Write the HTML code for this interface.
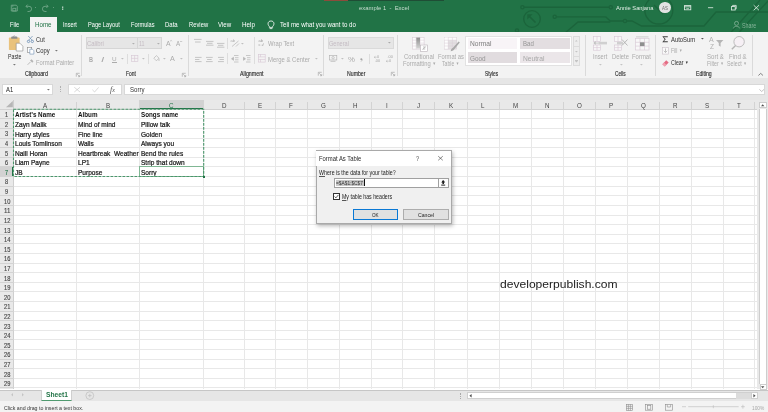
<!DOCTYPE html><html><head><meta charset="utf-8"><title>Excel</title><style>
*{margin:0;padding:0;box-sizing:border-box}
html,body{width:768px;height:412px;overflow:hidden;background:#fff;font-family:"Liberation Sans",sans-serif;}
.a{position:absolute;white-space:nowrap}
.t{position:absolute;white-space:nowrap;line-height:1.117}
</style></head><body><div id="root" style="position:absolute;left:0;top:0;width:768px;height:412px;overflow:hidden;will-change:transform">
<div class="a" style="left:0px;top:0px;width:768px;height:32.3px;background:#217346"></div>
<div class="a" style="left:323.8px;top:0px;width:24px;height:1px;background:#8c4b3b"></div>
<div class="a" style="left:347.8px;top:0px;width:96px;height:1px;background:#1f4d35"></div>
<svg class="a" style="left:0px;top:0px;overflow:visible" width="768" height="32" viewBox="0 0 768 32"><g stroke="#1b643b" stroke-width="1.35" fill="none">
<line x1="524" y1="7.2" x2="609.2" y2="7.2"/><circle cx="522.4" cy="7.2" r="1.6"/><circle cx="610.8" cy="7.2" r="1.6"/>
<line x1="556.3" y1="16.8" x2="605.6" y2="16.8"/><circle cx="554.7" cy="16.8" r="1.6"/>
<polyline points="605.6,16.8 610.3,21 623.4,21"/><circle cx="625" cy="21" r="1.6"/>
<polyline points="626.6,21 632,21 641.6,26 704,26 716,12 768,12"/>
<polyline points="565,33 578,22 610.3,22"/>
<polyline points="480,33 512,33"/>
<circle cx="532" cy="19" r="8.3"/><line x1="529" y1="16" x2="535.5" y2="22.5" stroke-width="1.6"/></g><path d="M527.3 14.3 h5.2 l-5.2 5.2z" fill="#1b643b"/><g stroke="#1b643b" stroke-width="1.35" fill="none">
<circle cx="517" cy="30.5" r="1.6"/>
<circle cx="658.8" cy="10" r="14"/><line x1="654" y1="5" x2="663" y2="14"/>
<line x1="730.4" y1="33" x2="760" y2="0"/><line x1="738.4" y1="33" x2="768" y2="1"/>
</g></svg>
<svg class="a" style="left:0px;top:0px;overflow:visible" width="80" height="16" viewBox="0 0 80 16"><g stroke="#6fa688" stroke-width="0.9" fill="none">
<path d="M11.3 5.2 h5 l1 1 v4.8 h-6z"/><rect x="12.8" y="8.3" width="3" height="2.7"/><line x1="12.8" y1="5.2" x2="12.8" y2="6.8"/>
<path d="M26 6.3 h3 a2.6 2.6 0 0 1 0 5.2 h-1.5"/><path d="M27.6 4.6 l-1.6 1.7 l1.6 1.7"/>
<path d="M48 6.3 h-3 a2.6 2.6 0 0 0 0 5.2 h1.5"/><path d="M46.4 4.6 l1.6 1.7 l-1.6 1.7"/>
</g>
<g fill="#6fa688"><rect x="35" y="7" width="1" height="0.8"/><rect x="53" y="7" width="1" height="0.8"/></g>
<g fill="#e4efe8"><rect x="62" y="6.6" width="1.3" height="1.1"/><rect x="62" y="8.6" width="1.3" height="1.1"/></g></svg>
<div class="t" style="left:358.70px;top:5.00px;font-size:6px;color:#c9ddd1;transform:scaleX(0.982);transform-origin:0 0;">example 1&nbsp; -&nbsp; Excel</div>
<div class="t" style="left:615.90px;top:5.00px;font-size:6px;color:#e3eee7;transform:scaleX(0.958);transform-origin:0 0;">Annie Sanjana</div>
<div class="a" style="left:658.8px;top:1.8px;width:12.1px;height:11.7px;background:#e3e3e3;border-radius:50%"></div>
<div class="t" style="left:662.00px;top:6.00px;font-size:4.8px;color:#6b6b6b;transform:scaleX(0.921);transform-origin:0 0;">AS</div>
<svg class="a" style="left:680px;top:0px;overflow:visible" width="88" height="16" viewBox="0 0 88 16"><g stroke="#e8f0eb" stroke-width="0.8" fill="none">
<rect x="4.4" y="5.6" width="6.4" height="4.2"/><line x1="4.4" y1="6.8" x2="10.8" y2="6.8"/><path d="M6.4 7.9 l1.2 1.2 l1.2 -1.2"/>
<line x1="28" y1="7.7" x2="33.2" y2="7.7"/>
<rect x="51.4" y="6.6" width="3.8" height="3.4"/><polyline points="52.6,6.6 52.6,5.4 56.2,5.4 56.2,8.8 55.2,8.8"/>
<line x1="73.7" y1="5.2" x2="79" y2="10.3"/><line x1="79" y1="5.2" x2="73.7" y2="10.3"/>
</g></svg>
<div class="a" style="left:30.2px;top:17px;width:26.6px;height:15.3px;background:#f3f3f3"></div>
<div class="t" style="left:9.80px;top:21.00px;font-size:7px;color:#ffffff;transform:scaleX(0.816);transform-origin:0 0;">File</div>
<div class="t" style="left:62.70px;top:21.00px;font-size:7px;color:#ffffff;transform:scaleX(0.794);transform-origin:0 0;">Insert</div>
<div class="t" style="left:87.80px;top:21.00px;font-size:7px;color:#ffffff;transform:scaleX(0.812);transform-origin:0 0;">Page Layout</div>
<div class="t" style="left:130.60px;top:21.00px;font-size:7px;color:#ffffff;transform:scaleX(0.808);transform-origin:0 0;">Formulas</div>
<div class="t" style="left:165.20px;top:21.00px;font-size:7px;color:#ffffff;transform:scaleX(0.858);transform-origin:0 0;">Data</div>
<div class="t" style="left:188.90px;top:21.00px;font-size:7px;color:#ffffff;transform:scaleX(0.832);transform-origin:0 0;">Review</div>
<div class="t" style="left:218.20px;top:21.00px;font-size:7px;color:#ffffff;transform:scaleX(0.877);transform-origin:0 0;">View</div>
<div class="t" style="left:242.00px;top:21.00px;font-size:7px;color:#ffffff;transform:scaleX(0.897);transform-origin:0 0;">Help</div>
<div class="t" style="left:35.10px;top:21.00px;font-size:7px;color:#217346;transform:scaleX(0.888);transform-origin:0 0;">Home</div>
<svg class="a" style="left:266px;top:20px;overflow:visible" width="10" height="10" viewBox="0 0 10 10"><g stroke="#fff" stroke-width="0.8" fill="none"><path d="M3.3 6.4 C1.3 4.6 1.6 1 5 1 C8.4 1 8.7 4.6 6.7 6.4 V7.4 H3.3 Z"/><line x1="3.6" y1="8.6" x2="6.4" y2="8.6"/></g></svg>
<div class="t" style="left:280.30px;top:21.00px;font-size:7px;color:#ffffff;transform:scaleX(0.878);transform-origin:0 0;">Tell me what you want to do</div>
<svg class="a" style="left:733px;top:21px;overflow:visible" width="7" height="8" viewBox="0 0 7 8"><g stroke="#86b59a" stroke-width="0.8" fill="none"><circle cx="3.5" cy="2.4" r="2"/><path d="M0.4 7.3 C0.8 4.8 6.2 4.8 6.6 7.3"/></g></svg>
<div class="t" style="left:741.90px;top:22.00px;font-size:6.6px;color:#86b59a;transform:scaleX(0.811);transform-origin:0 0;">Share</div>
<div class="a" style="left:0px;top:32.3px;width:768px;height:46px;background:#f3f3f3"></div>
<div class="a" style="left:0px;top:78.3px;width:768px;height:22.1px;background:#e6e6e6"></div>
<div class="t" style="left:25.10px;top:70.00px;font-size:6.4px;color:#2e2e2e;transform:scaleX(0.836);transform-origin:0 0;-webkit-text-stroke:0.15px #333;">Clipboard</div>
<div class="t" style="left:125.90px;top:70.00px;font-size:6.4px;color:#2e2e2e;transform:scaleX(0.766);transform-origin:0 0;-webkit-text-stroke:0.15px #333;">Font</div>
<div class="t" style="left:239.80px;top:70.00px;font-size:6.4px;color:#2e2e2e;transform:scaleX(0.830);transform-origin:0 0;-webkit-text-stroke:0.15px #333;">Alignment</div>
<div class="t" style="left:347.20px;top:70.00px;font-size:6.4px;color:#2e2e2e;transform:scaleX(0.813);transform-origin:0 0;-webkit-text-stroke:0.15px #333;">Number</div>
<div class="t" style="left:484.60px;top:70.00px;font-size:6.4px;color:#2e2e2e;transform:scaleX(0.751);transform-origin:0 0;-webkit-text-stroke:0.15px #333;">Styles</div>
<div class="t" style="left:615.00px;top:70.00px;font-size:6.4px;color:#2e2e2e;transform:scaleX(0.744);transform-origin:0 0;-webkit-text-stroke:0.15px #333;">Cells</div>
<div class="t" style="left:695.90px;top:70.00px;font-size:6.4px;color:#2e2e2e;transform:scaleX(0.802);transform-origin:0 0;-webkit-text-stroke:0.15px #333;">Editing</div>
<svg class="a" style="left:76px;top:72.6px;overflow:visible" width="4" height="4" viewBox="0 0 4 4"><g stroke="#9a9a9a" stroke-width="0.6" fill="none"><polyline points="0.3,3.7 0.3,0.3 3.7,0.3"/><line x1="1.2" y1="1.2" x2="3.6" y2="3.6"/><polyline points="2,3.7 3.7,3.7 3.7,2"/></g></svg>
<svg class="a" style="left:182.1px;top:72.6px;overflow:visible" width="4" height="4" viewBox="0 0 4 4"><g stroke="#9a9a9a" stroke-width="0.6" fill="none"><polyline points="0.3,3.7 0.3,0.3 3.7,0.3"/><line x1="1.2" y1="1.2" x2="3.6" y2="3.6"/><polyline points="2,3.7 3.7,3.7 3.7,2"/></g></svg>
<svg class="a" style="left:318.4px;top:72.4px;overflow:visible" width="4" height="4" viewBox="0 0 4 4"><g stroke="#9a9a9a" stroke-width="0.6" fill="none"><polyline points="0.3,3.7 0.3,0.3 3.7,0.3"/><line x1="1.2" y1="1.2" x2="3.6" y2="3.6"/><polyline points="2,3.7 3.7,3.7 3.7,2"/></g></svg>
<svg class="a" style="left:391.3px;top:72.4px;overflow:visible" width="4" height="4" viewBox="0 0 4 4"><g stroke="#9a9a9a" stroke-width="0.6" fill="none"><polyline points="0.3,3.7 0.3,0.3 3.7,0.3"/><line x1="1.2" y1="1.2" x2="3.6" y2="3.6"/><polyline points="2,3.7 3.7,3.7 3.7,2"/></g></svg>
<div class="a" style="left:81px;top:34.5px;width:1px;height:41.5px;background:#dadada"></div>
<div class="a" style="left:188px;top:34.5px;width:1px;height:41.5px;background:#dadada"></div>
<div class="a" style="left:323px;top:34.5px;width:1px;height:41.5px;background:#dadada"></div>
<div class="a" style="left:397px;top:34.5px;width:1px;height:41.5px;background:#dadada"></div>
<div class="a" style="left:585px;top:34.5px;width:1px;height:41.5px;background:#dadada"></div>
<div class="a" style="left:655px;top:34.5px;width:1px;height:41.5px;background:#dadada"></div>
<div class="a" style="left:752px;top:34.5px;width:1px;height:41.5px;background:#dadada"></div>
<svg class="a" style="left:8px;top:35px;overflow:visible" width="16" height="17" viewBox="0 0 16 17"><rect x="0.9" y="2.6" width="10.7" height="12.3" rx="0.6" fill="#e9c27c"/>
<path d="M3.2 3.7 v-1.4 q0 -0.9 0.9 -0.9 h1.2 q0.3 -0.9 1 -0.9 q0.7 0 1 0.9 h1.2 q0.9 0 0.9 0.9 v1.4z" fill="#8c8c8c"/><circle cx="6.3" cy="1.3" r="0.45" fill="#f3f3f3"/>
<path d="M8.2 8.2 h3.7 l3 3 v4.8 h-6.7z" fill="#fff" stroke="#8a8a8a" stroke-width="0.6"/></svg>
<div class="t" style="left:7.80px;top:53.00px;font-size:6.4px;color:#303030;transform:scaleX(0.819);transform-origin:0 0;">Paste</div>
<svg class="a" style="left:12.9px;top:63.7px;overflow:visible" width="3" height="2" viewBox="0 0 3 2"><path d="M0 0 h2.8 l-1.4 1.4z" fill="#777"/></svg>
<svg class="a" style="left:26.8px;top:35.9px;overflow:visible" width="7" height="7" viewBox="0 0 7 7"><g stroke="#6d8fb3" stroke-width="0.7" fill="none"><line x1="1.2" y1="0" x2="5.2" y2="4.3"/><line x1="5.6" y1="0" x2="1.6" y2="4.3"/></g><g stroke="#5b82ad" stroke-width="0.7" fill="none"><circle cx="1.5" cy="5.4" r="1.2"/><circle cx="5.3" cy="5.4" r="1.2"/></g></svg>
<div class="t" style="left:36.00px;top:36.00px;font-size:6.4px;color:#303030;transform:scaleX(0.874);transform-origin:0 0;">Cut</div>
<svg class="a" style="left:26.5px;top:47.1px;overflow:visible" width="7.5" height="7.5" viewBox="0 0 7.5 7.5"><g stroke="#858585" stroke-width="0.6" fill="#fff"><rect x="0.5" y="0.5" width="4.2" height="5"/><path d="M2.8 2.2 h2.6 l1.5 1.5 v3.4 h-4.1z" stroke="#6d8fb3"/></g></svg>
<div class="t" style="left:36.00px;top:47.00px;font-size:6.4px;color:#303030;transform:scaleX(0.917);transform-origin:0 0;">Copy</div>
<svg class="a" style="left:54.5px;top:50.3px;overflow:visible" width="3" height="2" viewBox="0 0 3 2"><path d="M0 0 h2.8 l-1.4 1.4z" fill="#777"/></svg>
<svg class="a" style="left:27.4px;top:59.4px;overflow:visible" width="6.5" height="6.5" viewBox="0 0 6.5 6.5"><g stroke="#b5b5b5" stroke-width="0.9" fill="none"><line x1="0.6" y1="5.8" x2="3.4" y2="3"/></g><path d="M3 1.5 l1.5 -1.2 l2 2 l-1.2 1.5z" fill="#b5b5b5"/></svg>
<div class="t" style="left:36.00px;top:59.00px;font-size:6.4px;color:#ababab;transform:scaleX(0.905);transform-origin:0 0;">Format Painter</div>
<div class="a" style="left:86.2px;top:37.1px;width:51.4px;height:12px;background:#e6e6e6;border:0.6px solid #d6d6d6"></div>
<div class="a" style="left:137.1px;top:37.1px;width:24.8px;height:12px;background:#e6e6e6;border:0.6px solid #d6d6d6"></div>
<div class="t" style="left:87.30px;top:40.00px;font-size:6.6px;color:#c4bcc3;transform:scaleX(0.903);transform-origin:0 0;">Calibri</div>
<div class="t" style="left:139.00px;top:40.00px;font-size:6.6px;color:#c4bcc3;transform:scaleX(0.816);transform-origin:0 0;">11</div>
<svg class="a" style="left:132.2px;top:42.599999999999994px;overflow:visible" width="3" height="2" viewBox="0 0 3 2"><path d="M0 0 h2.8 l-1.4 1.4z" fill="#b0b0b0"/></svg>
<svg class="a" style="left:157.29999999999998px;top:42.599999999999994px;overflow:visible" width="3" height="2" viewBox="0 0 3 2"><path d="M0 0 h2.8 l-1.4 1.4z" fill="#b0b0b0"/></svg>
<div class="t" style="left:165.70px;top:40.00px;font-size:6.8px;color:#ababab;transform:scaleX(1.010);transform-origin:0 0;">A</div>
<div class="t" style="left:176.20px;top:40.00px;font-size:6.4px;color:#ababab;transform:scaleX(0.979);transform-origin:0 0;">A</div>
<svg class="a" style="left:170.2px;top:40.2px;overflow:visible" width="2.5" height="2" viewBox="0 0 2.5 2"><path d="M0 1.3 l1.1 -1 l1.1 1" stroke="#ababab" stroke-width="0.55" fill="none"/></svg>
<svg class="a" style="left:180.3px;top:40.6px;overflow:visible" width="2.5" height="2" viewBox="0 0 2.5 2"><line x1="0" y1="0.5" x2="2.2" y2="0.5" stroke="#ababab" stroke-width="0.55"/></svg>
<div class="t" style="left:89.30px;top:56.00px;font-size:6.4px;color:#ababab;font-weight:bold;transform:scaleX(0.868);transform-origin:0 0;">B</div>
<div class="t" style="left:101.00px;top:56.00px;font-size:6.4px;color:#ababab;font-style:italic;transform:scaleX(1.842);transform-origin:0 0;">I</div>
<div class="t" style="left:111.50px;top:56.00px;font-size:6.2px;color:#ababab;transform:scaleX(1.030);transform-origin:0 0;">U</div>
<div class="a" style="left:111.5px;top:62.2px;width:5px;height:0.6px;background:#ababab"></div>
<svg class="a" style="left:121.1px;top:58.0px;overflow:visible" width="3" height="2" viewBox="0 0 3 2"><path d="M0 0 h2.8 l-1.4 1.4z" fill="#c0c0c0"/></svg>
<div class="a" style="left:127px;top:53.8px;width:1px;height:9.800000000000004px;background:#dddddd"></div>
<svg class="a" style="left:131.2px;top:55.2px;overflow:visible" width="7.2" height="6.8" viewBox="0 0 7.2 6.8"><g stroke="#d6c6d4" stroke-width="0.6" fill="none"><rect x="0.3" y="0.3" width="6.6" height="6.2"/><line x1="3.6" y1="0.3" x2="3.6" y2="6.5"/><line x1="0.3" y1="3.4" x2="6.9" y2="3.4"/></g></svg>
<svg class="a" style="left:141.79999999999998px;top:58.0px;overflow:visible" width="3" height="2" viewBox="0 0 3 2"><path d="M0 0 h2.8 l-1.4 1.4z" fill="#c0c0c0"/></svg>
<div class="a" style="left:148px;top:53.8px;width:1px;height:9.800000000000004px;background:#dddddd"></div>
<svg class="a" style="left:153px;top:55px;overflow:visible" width="6.5" height="7" viewBox="0 0 6.5 7"><g stroke="#b5b5b5" stroke-width="0.7" fill="none"><path d="M0.8 3.2 l2.6 -2.6 l2.6 2.6 l-2.6 2.6z"/><path d="M6 3.5 v2.5"/></g></svg>
<svg class="a" style="left:162.5px;top:58.0px;overflow:visible" width="3" height="2" viewBox="0 0 3 2"><path d="M0 0 h2.8 l-1.4 1.4z" fill="#c0c0c0"/></svg>
<div class="t" style="left:170.30px;top:55.00px;font-size:6.6px;color:#ababab;transform:scaleX(1.085);transform-origin:0 0;">A</div>
<svg class="a" style="left:179.79999999999998px;top:58.0px;overflow:visible" width="3" height="2" viewBox="0 0 3 2"><path d="M0 0 h2.8 l-1.4 1.4z" fill="#c0c0c0"/></svg>
<svg class="a" style="left:194.25px;top:39.3px;overflow:visible" width="8" height="6" viewBox="0 0 8 6"><g stroke="#b5b5b5" stroke-width="0.75"><line x1="0" y1="0.4" x2="7.6" y2="0.4"/><line x1="1" y1="3.0" x2="6.6" y2="3.0"/></g></svg>
<svg class="a" style="left:205.5px;top:41px;overflow:visible" width="8" height="6" viewBox="0 0 8 6"><g stroke="#b5b5b5" stroke-width="0.75"><line x1="0" y1="0.4" x2="7.5" y2="0.4"/><line x1="1" y1="2.3" x2="6.5" y2="2.3"/><line x1="0" y1="4.2" x2="7.5" y2="4.2"/></g></svg>
<svg class="a" style="left:216.9px;top:43px;overflow:visible" width="8" height="6" viewBox="0 0 8 6"><g stroke="#b5b5b5" stroke-width="0.75"><line x1="0" y1="0.4" x2="7.4" y2="0.4"/><line x1="1" y1="2.3" x2="6.4" y2="2.3"/><line x1="0" y1="4.2" x2="7.4" y2="4.2"/></g></svg>
<div class="a" style="left:227px;top:38.3px;width:1px;height:10.700000000000003px;background:#dddddd"></div>
<svg class="a" style="left:230.9px;top:39.5px;overflow:visible" width="9" height="7" viewBox="0 0 9 7"><g stroke="#b5b5b5" stroke-width="0.7" fill="none"><path d="M1 6.5 L7.5 1"/><path d="M5 6.5 l3 -3"/></g></svg>
<div class="t" style="left:230.5px;top:38.8px;font-size:4px;color:#ababab;line-height:1">ab</div>
<svg class="a" style="left:241.1px;top:42.8px;overflow:visible" width="3" height="2" viewBox="0 0 3 2"><path d="M0 0 h2.8 l-1.4 1.4z" fill="#c0c0c0"/></svg>
<div class="a" style="left:254px;top:37.4px;width:1px;height:26.699999999999996px;background:#dddddd"></div>
<svg class="a" style="left:194.8px;top:56.6px;overflow:visible" width="8" height="6" viewBox="0 0 8 6"><g stroke="#b5b5b5" stroke-width="0.75"><line x1="0" y1="0.4" x2="6.6" y2="0.4"/><line x1="0" y1="2.5" x2="4.4" y2="2.5"/><line x1="0" y1="4.6000000000000005" x2="6.6" y2="4.6000000000000005"/></g></svg>
<svg class="a" style="left:205.9px;top:56.6px;overflow:visible" width="8" height="6" viewBox="0 0 8 6"><g stroke="#b5b5b5" stroke-width="0.75"><line x1="0" y1="0.4" x2="6.7" y2="0.4"/><line x1="1.1" y1="2.5" x2="5.6" y2="2.5"/><line x1="0" y1="4.6000000000000005" x2="6.7" y2="4.6000000000000005"/></g></svg>
<svg class="a" style="left:217.5px;top:56.6px;overflow:visible" width="8" height="6" viewBox="0 0 8 6"><g stroke="#b5b5b5" stroke-width="0.75"><line x1="0" y1="0.4" x2="5.9" y2="0.4"/><line x1="1.5" y1="2.5" x2="5.9" y2="2.5"/><line x1="0" y1="4.6000000000000005" x2="5.9" y2="4.6000000000000005"/></g></svg>
<div class="a" style="left:227px;top:53.4px;width:1px;height:10.699999999999996px;background:#dddddd"></div>
<svg class="a" style="left:231.4px;top:54.9px;overflow:visible" width="8" height="7.5" viewBox="0 0 8 7.5"><g stroke="#b5b5b5" stroke-width="0.7" fill="none"><line x1="3" y1="0.5" x2="7.5" y2="0.5"/><line x1="3" y1="7" x2="7.5" y2="7"/><line x1="4" y1="2.7" x2="7.5" y2="2.7"/><line x1="4" y1="4.8" x2="7.5" y2="4.8"/><path d="M2.5 2.3 l-2 1.5 l2 1.5z" fill="#b5b5b5"/></g></svg>
<svg class="a" style="left:242.5px;top:54.9px;overflow:visible" width="8" height="7.5" viewBox="0 0 8 7.5"><g stroke="#b5b5b5" stroke-width="0.7" fill="none"><line x1="3" y1="0.5" x2="7.5" y2="0.5"/><line x1="3" y1="7" x2="7.5" y2="7"/><line x1="4" y1="2.7" x2="7.5" y2="2.7"/><line x1="4" y1="4.8" x2="7.5" y2="4.8"/><path d="M0.5 2.3 l2 1.5 l-2 1.5z" fill="#b5b5b5"/></g></svg>
<div class="t" style="left:258.5px;top:39.3px;font-size:4px;color:#9b9b9b;line-height:1">ab</div>
<div class="t" style="left:258.5px;top:43px;font-size:4px;color:#9b9b9b;line-height:1">c↲</div>
<div class="t" style="left:268.00px;top:40.00px;font-size:6.4px;color:#ababab;transform:scaleX(0.917);transform-origin:0 0;">Wrap Text</div>
<svg class="a" style="left:258.2px;top:54.3px;overflow:visible" width="7.5" height="8.4" viewBox="0 0 7.5 8.4"><g stroke="#d6c6d4" stroke-width="0.6" fill="none"><rect x="0.3" y="0.3" width="6.9" height="7.8"/><line x1="0.3" y1="2.9" x2="7.2" y2="2.9"/><line x1="0.3" y1="5.5" x2="7.2" y2="5.5"/><line x1="2.5" y1="0.3" x2="2.5" y2="2.9"/><line x1="2.5" y1="5.5" x2="2.5" y2="8.1"/></g></svg>
<div class="t" style="left:268.00px;top:56.00px;font-size:6.4px;color:#ababab;transform:scaleX(0.930);transform-origin:0 0;">Merge &amp; Center</div>
<svg class="a" style="left:314.8px;top:58.4px;overflow:visible" width="3" height="2" viewBox="0 0 3 2"><path d="M0 0 h2.8 l-1.4 1.4z" fill="#c0c0c0"/></svg>
<div class="a" style="left:328px;top:37.1px;width:65.6px;height:12.2px;background:#e6e6e6;border:0.5px solid #dadada"></div>
<div class="t" style="left:329.30px;top:40.00px;font-size:6.6px;color:#c4bcc3;transform:scaleX(0.851);transform-origin:0 0;">General</div>
<svg class="a" style="left:388.40000000000003px;top:42.3px;overflow:visible" width="3" height="2" viewBox="0 0 3 2"><path d="M0 0 h2.8 l-1.4 1.4z" fill="#aaa"/></svg>
<svg class="a" style="left:329.3px;top:54.8px;overflow:visible" width="8.2" height="7.8" viewBox="0 0 8.2 7.8"><g stroke="#b5b5b5" stroke-width="0.7" fill="none"><rect x="0.4" y="0.4" width="7.4" height="4.6"/><circle cx="4.1" cy="2.7" r="1.2"/><line x1="1.5" y1="6.4" x2="6.5" y2="6.4"/></g></svg>
<svg class="a" style="left:340.6px;top:58.3px;overflow:visible" width="3" height="2" viewBox="0 0 3 2"><path d="M0 0 h2.8 l-1.4 1.4z" fill="#c0c0c0"/></svg>
<div class="t" style="left:347.50px;top:56.00px;font-size:6.5px;color:#ababab;transform:scaleX(1.193);transform-origin:0 0;">%</div>
<svg class="a" style="left:360px;top:57.5px;overflow:visible" width="3" height="4" viewBox="0 0 3 4"><circle cx="1.3" cy="1.2" r="1" fill="#a5a5a5"/><path d="M2.2 1.3 q0 1.6 -1.2 2.3" stroke="#a5a5a5" stroke-width="0.6" fill="none"/></svg>
<div class="a" style="left:369px;top:54px;width:1px;height:10px;background:#dddddd"></div>
<svg class="a" style="left:373.5px;top:54.5px;overflow:visible" width="8" height="8" viewBox="0 0 8 8"><text x="3" y="3.4" font-size="3.8" fill="#a5a5a5" font-family="Liberation Sans">0</text><path d="M0.3 2.2 h2.4 M0.3 2.2 l1 -0.9 M0.3 2.2 l1 0.9" stroke="#a5a5a5" stroke-width="0.5" fill="none"/><text x="0.8" y="7.4" font-size="3.8" fill="#a5a5a5" font-family="Liberation Sans">.00</text></svg>
<svg class="a" style="left:385.5px;top:54.5px;overflow:visible" width="8" height="8" viewBox="0 0 8 8"><text x="1.5" y="3.4" font-size="3.8" fill="#a5a5a5" font-family="Liberation Sans">.00</text><path d="M0.3 6.2 h2.4 M0.3 6.2 l1 -0.9 M0.3 6.2 l1 0.9" stroke="#a5a5a5" stroke-width="0.5" fill="none"/><text x="3" y="7.4" font-size="3.8" fill="#a5a5a5" font-family="Liberation Sans">0</text></svg>
<svg class="a" style="left:411.7px;top:37.1px;overflow:visible" width="16" height="15" viewBox="0 0 16 15"><rect x="0.3" y="0.3" width="11.8" height="11.8" fill="#fdfdfd" stroke="#d9cdd6" stroke-width="0.6"/><g stroke="#d9cdd6" stroke-width="0.5"><line x1="0.3" y1="3.2" x2="12.1" y2="3.2"/><line x1="0.3" y1="6.1" x2="12.1" y2="6.1"/><line x1="0.3" y1="9" x2="12.1" y2="9"/><line x1="4.2" y1="0.3" x2="4.2" y2="12.1"/><line x1="8.1" y1="0.3" x2="8.1" y2="12.1"/></g><defs><linearGradient id="cfg" x1="0" y1="0" x2="0" y2="1"><stop offset="0" stop-color="#8e8e8e"/><stop offset="1" stop-color="#d6d6d6"/></linearGradient></defs><rect x="4.3" y="0.6" width="3.7" height="11" fill="url(#cfg)"/><rect x="8.6" y="8" width="7" height="6.6" fill="#fff" stroke="#b8b0b6" stroke-width="0.6"/><path d="M10.6 12.6 l3 -3 M11 10 h2.5 M10.8 12 h2.5" stroke="#9a9a9a" stroke-width="0.6"/></svg>
<div class="t" style="left:404.00px;top:53.00px;font-size:6.4px;color:#ababab;transform:scaleX(0.940);transform-origin:0 0;">Conditional</div>
<div class="t" style="left:402.80px;top:60.00px;font-size:6.4px;color:#ababab;transform:scaleX(0.904);transform-origin:0 0;">Formatting <span style="font-size:4.4px;vertical-align:1px">▼</span></div>
<svg class="a" style="left:443.8px;top:37.1px;overflow:visible" width="16" height="15" viewBox="0 0 16 15"><rect x="0.3" y="0.3" width="12.3" height="11.8" fill="#e3e0e2" stroke="#d9cdd6" stroke-width="0.6"/><rect x="0.6" y="0.6" width="11.7" height="2.6" fill="#fdfdfd"/><rect x="0.6" y="0.6" width="3.6" height="11.2" fill="#fdfdfd"/><g stroke="#d9cdd6" stroke-width="0.5"><line x1="0.3" y1="3.2" x2="12.6" y2="3.2"/><line x1="0.3" y1="6.1" x2="12.6" y2="6.1"/><line x1="0.3" y1="9" x2="12.6" y2="9"/><line x1="4.3" y1="0.3" x2="4.3" y2="12.1"/><line x1="8.4" y1="0.3" x2="8.4" y2="12.1"/></g><path d="M6.6 14.2 q0.3 -2.6 2.4 -3.4 l5.6 -6.4 l1.2 1.1 l-5.3 6.6 q-0.9 2.2 -3.9 2.1z" fill="#a9a9a9"/></svg>
<div class="t" style="left:437.90px;top:53.00px;font-size:6.4px;color:#ababab;transform:scaleX(0.899);transform-origin:0 0;">Format as</div>
<div class="t" style="left:442.00px;top:60.00px;font-size:6.4px;color:#ababab;transform:scaleX(0.802);transform-origin:0 0;">Table <span style="font-size:4.4px;vertical-align:1px">▼</span></div>
<div class="a" style="left:465.4px;top:35.75px;width:106.6px;height:30.65px;background:#fff;border:0.5px solid #e2e2e2"></div>
<div class="a" style="left:467.5px;top:38.25px;width:49.5px;height:10.45px;background:#f8f4f7"></div>
<div class="a" style="left:520px;top:38.25px;width:50.2px;height:10.45px;background:#e3dee1"></div>
<div class="a" style="left:467.5px;top:52.4px;width:49.5px;height:10.85px;background:#e1dcdf"></div>
<div class="a" style="left:520px;top:52.4px;width:50.2px;height:10.85px;background:#ebe6e9"></div>
<div class="t" style="left:469.60px;top:40.00px;font-size:7px;color:#7c7c7c;transform:scaleX(0.948);transform-origin:0 0;">Normal</div>
<div class="t" style="left:522.70px;top:40.00px;font-size:7px;color:#959595;transform:scaleX(0.867);transform-origin:0 0;">Bad</div>
<div class="t" style="left:469.60px;top:55.00px;font-size:7px;color:#959595;transform:scaleX(0.911);transform-origin:0 0;">Good</div>
<div class="t" style="left:522.70px;top:55.00px;font-size:7px;color:#a8a8a8;transform:scaleX(0.952);transform-origin:0 0;">Neutral</div>
<div class="a" style="left:572.7px;top:35.75px;width:6.9px;height:30.65px;background:#ededed;border:0.5px solid #dcdcdc"></div>
<div class="a" style="left:572.7px;top:45.9px;width:6.9px;height:0.5px;background:#dcdcdc"></div>
<div class="a" style="left:572.7px;top:56.1px;width:6.9px;height:0.5px;background:#dcdcdc"></div>
<svg class="a" style="left:574.8px;top:39.5px;overflow:visible" width="3" height="2" viewBox="0 0 3 2"><path d="M0 1.4 h2.6 l-1.3 -1.3z" fill="#c4c4c4"/></svg>
<svg class="a" style="left:574.75px;top:50.5px;overflow:visible" width="3" height="2" viewBox="0 0 3 2"><path d="M0 0 h2.8 l-1.4 1.4z" fill="#c4c4c4"/></svg>
<svg class="a" style="left:574.75px;top:61.3px;overflow:visible" width="3" height="2" viewBox="0 0 3 2"><path d="M0 0 h2.8 l-1.4 1.4z" fill="#c4c4c4"/></svg>
<div class="a" style="left:574.8px;top:60.1px;width:2.8px;height:0.5px;background:#c4c4c4"></div>
<svg class="a" style="left:592.7px;top:36.3px;overflow:visible" width="14.5" height="14.5" viewBox="0 0 14.5 14.5"><g stroke="#d6c6d4" stroke-width="0.6" fill="#f8f8f8"><rect x="0.5" y="0.3" width="7" height="5"/><line x1="4" y1="0.3" x2="4" y2="5.3"/><rect x="0.5" y="9" width="7" height="5.2"/><line x1="4" y1="9" x2="4" y2="14.2"/><line x1="0.5" y1="11.6" x2="7.5" y2="11.6"/></g><rect x="5.5" y="5.8" width="8.5" height="2.6" fill="#d0d0d0"/><path d="M0.3 7.1 l2.4 -2 v4z" fill="#c0c0c0"/><line x1="1.5" y1="7.1" x2="5.5" y2="7.1" stroke="#c0c0c0" stroke-width="0.8"/></svg>
<svg class="a" style="left:614px;top:36.3px;overflow:visible" width="14.5" height="14.5" viewBox="0 0 14.5 14.5"><g stroke="#d6c6d4" stroke-width="0.6" fill="#f8f8f8"><rect x="0.5" y="0.3" width="7" height="5"/><line x1="4" y1="0.3" x2="4" y2="5.3"/><rect x="0.5" y="9" width="7" height="5.2"/><line x1="4" y1="9" x2="4" y2="14.2"/><line x1="0.5" y1="11.6" x2="7.5" y2="11.6"/></g><rect x="3" y="5.8" width="6" height="2.6" fill="#d0d0d0"/><g stroke="#a8a8a8" stroke-width="0.8"><line x1="8" y1="3.5" x2="13.5" y2="9.5"/><line x1="13.5" y1="3.5" x2="8" y2="9.5"/></g></svg>
<svg class="a" style="left:634.5px;top:36.3px;overflow:visible" width="14.5" height="14.5" viewBox="0 0 14.5 14.5"><g stroke="#d6c6d4" stroke-width="0.6" fill="#f8f8f8"><rect x="0.5" y="2.5" width="13.5" height="11.5"/><line x1="0.5" y1="6.3" x2="14" y2="6.3"/><line x1="0.5" y1="10.1" x2="14" y2="10.1"/><line x1="5" y1="2.5" x2="5" y2="14"/><line x1="9.5" y1="2.5" x2="9.5" y2="14"/></g><rect x="5" y="6.3" width="4.5" height="3.8" fill="#8f8f8f"/><g stroke="#a8a8a8" stroke-width="0.5"><line x1="1" y1="0.9" x2="13.5" y2="0.9"/></g></svg>
<div class="t" style="left:592.70px;top:53.00px;font-size:6.4px;color:#ababab;transform:scaleX(0.894);transform-origin:0 0;">Insert</div>
<div class="t" style="left:612.00px;top:53.00px;font-size:6.4px;color:#ababab;transform:scaleX(0.914);transform-origin:0 0;">Delete</div>
<div class="t" style="left:631.80px;top:53.00px;font-size:6.4px;color:#ababab;transform:scaleX(0.928);transform-origin:0 0;">Format</div>
<svg class="a" style="left:598.5px;top:63.5px;overflow:visible" width="3" height="2" viewBox="0 0 3 2"><path d="M0 0 h2.8 l-1.4 1.4z" fill="#c4c4c4"/></svg>
<svg class="a" style="left:619.5px;top:63.5px;overflow:visible" width="3" height="2" viewBox="0 0 3 2"><path d="M0 0 h2.8 l-1.4 1.4z" fill="#c4c4c4"/></svg>
<svg class="a" style="left:640.2px;top:63.5px;overflow:visible" width="3" height="2" viewBox="0 0 3 2"><path d="M0 0 h2.8 l-1.4 1.4z" fill="#c4c4c4"/></svg>
<svg class="a" style="left:662.4px;top:36.4px;overflow:visible" width="6.2" height="6.6" viewBox="0 0 6.2 6.6"><path d="M0.3 0.3 H5.8 V1.3 H1.8 L3.8 3.3 L1.8 5.3 H5.8 V6.3 H0.3 L2.6 3.3 Z" fill="#3d3d3d"/></svg>
<div class="t" style="left:671.20px;top:36.00px;font-size:6.4px;color:#303030;transform:scaleX(0.919);transform-origin:0 0;">AutoSum</div>
<svg class="a" style="left:700.6px;top:38.3px;overflow:visible" width="3" height="2" viewBox="0 0 3 2"><path d="M0 0 h2.8 l-1.4 1.4z" fill="#555"/></svg>
<svg class="a" style="left:662px;top:47.4px;overflow:visible" width="7" height="7.4" viewBox="0 0 7 7.4"><g stroke="#c9c0c8" stroke-width="0.6" fill="#fafafa"><rect x="0.3" y="0.3" width="6.4" height="6.8"/></g><g stroke="#a8a8a8" stroke-width="0.7" fill="none"><line x1="3.5" y1="1.5" x2="3.5" y2="5.3"/><path d="M1.8 3.8 l1.7 1.7 l1.7 -1.7"/></g></svg>
<div class="t" style="left:671.20px;top:47.00px;font-size:6.4px;color:#ababab;transform:scaleX(0.797);transform-origin:0 0;">Fill <span style="font-size:4.4px;vertical-align:1px">▼</span></div>
<svg class="a" style="left:662.4px;top:59.6px;overflow:visible" width="7" height="6.6" viewBox="0 0 7 6.6"><path d="M0.4 4.2 L4.2 0.3 L6.7 2.6 L2.8 6.4 Z" fill="#e46c84"/><path d="M0.4 4.2 L2 2.6 L4.4 5 L2.8 6.4Z" fill="#f1a3b2"/></svg>
<div class="t" style="left:671.20px;top:59.00px;font-size:6.4px;color:#303030;transform:scaleX(0.821);transform-origin:0 0;">Clear <span style="font-size:4.4px;vertical-align:1px">▼</span></div>
<div class="t" style="left:709.10px;top:36.00px;font-size:6.4px;color:#b0b0b0;transform:scaleX(1.096);transform-origin:0 0;">A</div>
<div class="t" style="left:709.50px;top:43.00px;font-size:6.4px;color:#b0b0b0;transform:scaleX(1.025);transform-origin:0 0;">Z</div>
<svg class="a" style="left:715.6px;top:40px;overflow:visible" width="7.4" height="6.7" viewBox="0 0 7.4 6.7"><path d="M0 0 h7.4 l-2.8 3 v3.7 l-1.8 -1.1 v-2.6z" fill="#b5b5b5"/></svg>
<div class="t" style="left:707.20px;top:53.00px;font-size:6.4px;color:#ababab;transform:scaleX(0.950);transform-origin:0 0;">Sort &amp;</div>
<div class="t" style="left:707.20px;top:60.00px;font-size:6.4px;color:#ababab;transform:scaleX(0.830);transform-origin:0 0;">Filter <span style="font-size:4.4px;vertical-align:1px">▼</span></div>
<svg class="a" style="left:730.5px;top:36.2px;overflow:visible" width="14" height="14" viewBox="0 0 14 14"><g stroke="#b5b5b5" stroke-width="0.9" fill="#f6f0f5"><circle cx="8.1" cy="5.7" r="5.2"/></g><line x1="4.6" y1="9.4" x2="0.8" y2="13.2" stroke="#b5b5b5" stroke-width="1.4"/></svg>
<div class="t" style="left:728.50px;top:53.00px;font-size:6.4px;color:#ababab;transform:scaleX(0.957);transform-origin:0 0;">Find &amp;</div>
<div class="t" style="left:727.00px;top:60.00px;font-size:6.4px;color:#ababab;transform:scaleX(0.832);transform-origin:0 0;">Select <span style="font-size:4.4px;vertical-align:1px">▼</span></div>
<svg class="a" style="left:758.4px;top:73.4px;overflow:visible" width="5.5" height="3" viewBox="0 0 5.5 3"><polyline points="0.4,2.5 2.7,0.4 5,2.5" stroke="#555" stroke-width="0.7" fill="none"/></svg>
<div class="a" style="left:2.3px;top:83.5px;width:50.8px;height:11.7px;background:#fff;border:0.5px solid #d8d8d8"></div>
<div class="t" style="left:5.50px;top:86.00px;font-size:6.8px;color:#262626;transform:scaleX(0.864);transform-origin:0 0;">A1</div>
<svg class="a" style="left:46.5px;top:88.6px;overflow:visible" width="3" height="2" viewBox="0 0 3 2"><path d="M0 0 h2.8 l-1.4 1.4z" fill="#777"/></svg>
<div class="a" style="left:60px;top:86.2px;width:1px;height:5.8px;border-left:1px dotted #b0b0b0"></div>
<div class="a" style="left:68.4px;top:83.5px;width:53.7px;height:11.7px;background:#fff;border:0.5px solid #d8d8d8"></div>
<svg class="a" style="left:73.8px;top:86.7px;overflow:visible" width="6.3" height="5.3" viewBox="0 0 6.3 5.3"><g stroke="#c0c0c0" stroke-width="0.6"><line x1="0.3" y1="0.3" x2="6" y2="5"/><line x1="6" y1="0.3" x2="0.3" y2="5"/></g></svg>
<svg class="a" style="left:91.8px;top:86.7px;overflow:visible" width="7" height="5.3" viewBox="0 0 7 5.3"><polyline points="0.4,2.8 2.6,5 6.6,0.4" stroke="#c0c0c0" stroke-width="0.6" fill="none"/></svg>
<div class="t" style="left:110px;top:85.6px;font-size:8.2px;color:#555;font-family:'Liberation Serif',serif;font-style:italic;line-height:1">f<span style="font-size:6px">x</span></div>
<div class="a" style="left:124.2px;top:83.5px;width:641px;height:11.7px;background:#fff;border:0.5px solid #d8d8d8"></div>
<div class="t" style="left:130.10px;top:86.00px;font-size:6.6px;color:#333;transform:scaleX(0.919);transform-origin:0 0;">Sorry</div>
<svg class="a" style="left:759px;top:88.5px;overflow:visible" width="5.5" height="3" viewBox="0 0 5.5 3"><polyline points="0.4,0.4 2.7,2.5 5,0.4" stroke="#999" stroke-width="0.6" fill="none"/></svg>
<div class="a" style="left:0px;top:100.4px;width:757.4px;height:289.1px;background:#fff"></div>
<div class="a" style="left:0px;top:100.4px;width:757.4px;height:8.899999999999991px;background:#e9e9e9"></div>
<div class="a" style="left:0px;top:109.3px;width:13.5px;height:280.2px;background:#e9e9e9"></div>
<div class="a" style="left:139.3px;top:100.4px;width:64.39999999999998px;height:8.899999999999991px;background:#d2d2d2"></div>
<div class="a" style="left:139.3px;top:108.1px;width:64.39999999999998px;height:1.2px;background:#217346"></div>
<div class="a" style="left:0px;top:166.95999999999998px;width:13.5px;height:9.61px;background:#d2d2d2"></div>
<div class="a" style="left:12.3px;top:166.95999999999998px;width:1.2px;height:9.61px;background:#217346"></div>
<svg class="a" style="left:5.9px;top:101.4px;overflow:visible" width="7" height="6.4" viewBox="0 0 7 6.4"><path d="M6.8 0 V6.2 H0z" fill="#b6b6b6"/></svg>
<div class="a" style="left:75.9px;top:109.3px;width:1px;height:280.2px;background:#e8e8e8"></div>
<div class="a" style="left:75.9px;top:101.9px;width:1px;height:7.3999999999999915px;background:#d3d3d3"></div>
<div class="a" style="left:138.8px;top:109.3px;width:1px;height:280.2px;background:#e8e8e8"></div>
<div class="a" style="left:138.8px;top:101.9px;width:1px;height:7.3999999999999915px;background:#d3d3d3"></div>
<div class="a" style="left:203.2px;top:109.3px;width:1px;height:280.2px;background:#e8e8e8"></div>
<div class="a" style="left:203.2px;top:101.9px;width:1px;height:7.3999999999999915px;background:#d3d3d3"></div>
<div class="a" style="left:244.2px;top:109.3px;width:1px;height:280.2px;background:#e8e8e8"></div>
<div class="a" style="left:244.2px;top:101.9px;width:1px;height:7.3999999999999915px;background:#d3d3d3"></div>
<div class="a" style="left:274.8px;top:109.3px;width:1px;height:280.2px;background:#e8e8e8"></div>
<div class="a" style="left:274.8px;top:101.9px;width:1px;height:7.3999999999999915px;background:#d3d3d3"></div>
<div class="a" style="left:306.8px;top:109.3px;width:1px;height:280.2px;background:#e8e8e8"></div>
<div class="a" style="left:306.8px;top:101.9px;width:1px;height:7.3999999999999915px;background:#d3d3d3"></div>
<div class="a" style="left:338.8px;top:109.3px;width:1px;height:280.2px;background:#e8e8e8"></div>
<div class="a" style="left:338.8px;top:101.9px;width:1px;height:7.3999999999999915px;background:#d3d3d3"></div>
<div class="a" style="left:370.7px;top:109.3px;width:1px;height:280.2px;background:#e8e8e8"></div>
<div class="a" style="left:370.7px;top:101.9px;width:1px;height:7.3999999999999915px;background:#d3d3d3"></div>
<div class="a" style="left:402.4px;top:109.3px;width:1px;height:280.2px;background:#e8e8e8"></div>
<div class="a" style="left:402.4px;top:101.9px;width:1px;height:7.3999999999999915px;background:#d3d3d3"></div>
<div class="a" style="left:434.4px;top:109.3px;width:1px;height:280.2px;background:#e8e8e8"></div>
<div class="a" style="left:434.4px;top:101.9px;width:1px;height:7.3999999999999915px;background:#d3d3d3"></div>
<div class="a" style="left:466.6px;top:109.3px;width:1px;height:280.2px;background:#e8e8e8"></div>
<div class="a" style="left:466.6px;top:101.9px;width:1px;height:7.3999999999999915px;background:#d3d3d3"></div>
<div class="a" style="left:498.6px;top:109.3px;width:1px;height:280.2px;background:#e8e8e8"></div>
<div class="a" style="left:498.6px;top:101.9px;width:1px;height:7.3999999999999915px;background:#d3d3d3"></div>
<div class="a" style="left:530.8px;top:109.3px;width:1px;height:280.2px;background:#e8e8e8"></div>
<div class="a" style="left:530.8px;top:101.9px;width:1px;height:7.3999999999999915px;background:#d3d3d3"></div>
<div class="a" style="left:562.6px;top:109.3px;width:1px;height:280.2px;background:#e8e8e8"></div>
<div class="a" style="left:562.6px;top:101.9px;width:1px;height:7.3999999999999915px;background:#d3d3d3"></div>
<div class="a" style="left:594.5px;top:109.3px;width:1px;height:280.2px;background:#e8e8e8"></div>
<div class="a" style="left:594.5px;top:101.9px;width:1px;height:7.3999999999999915px;background:#d3d3d3"></div>
<div class="a" style="left:626.6px;top:109.3px;width:1px;height:280.2px;background:#e8e8e8"></div>
<div class="a" style="left:626.6px;top:101.9px;width:1px;height:7.3999999999999915px;background:#d3d3d3"></div>
<div class="a" style="left:658.6px;top:109.3px;width:1px;height:280.2px;background:#e8e8e8"></div>
<div class="a" style="left:658.6px;top:101.9px;width:1px;height:7.3999999999999915px;background:#d3d3d3"></div>
<div class="a" style="left:690.8px;top:109.3px;width:1px;height:280.2px;background:#e8e8e8"></div>
<div class="a" style="left:690.8px;top:101.9px;width:1px;height:7.3999999999999915px;background:#d3d3d3"></div>
<div class="a" style="left:722.6px;top:109.3px;width:1px;height:280.2px;background:#e8e8e8"></div>
<div class="a" style="left:722.6px;top:101.9px;width:1px;height:7.3999999999999915px;background:#d3d3d3"></div>
<div class="a" style="left:754.4px;top:109.3px;width:1px;height:280.2px;background:#e8e8e8"></div>
<div class="a" style="left:754.4px;top:101.9px;width:1px;height:7.3999999999999915px;background:#d3d3d3"></div>
<div class="a" style="left:13.0px;top:100.4px;width:1px;height:289.1px;background:#cfcfcf"></div>
<div class="a" style="left:13.5px;top:118.41px;width:743.9px;height:1px;background:#e8e8e8"></div>
<div class="a" style="left:0px;top:118.41px;width:13.5px;height:1px;background:#d3d3d3"></div>
<div class="a" style="left:13.5px;top:128.02px;width:743.9px;height:1px;background:#e8e8e8"></div>
<div class="a" style="left:0px;top:128.02px;width:13.5px;height:1px;background:#d3d3d3"></div>
<div class="a" style="left:13.5px;top:137.63px;width:743.9px;height:1px;background:#e8e8e8"></div>
<div class="a" style="left:0px;top:137.63px;width:13.5px;height:1px;background:#d3d3d3"></div>
<div class="a" style="left:13.5px;top:147.24px;width:743.9px;height:1px;background:#e8e8e8"></div>
<div class="a" style="left:0px;top:147.24px;width:13.5px;height:1px;background:#d3d3d3"></div>
<div class="a" style="left:13.5px;top:156.85px;width:743.9px;height:1px;background:#e8e8e8"></div>
<div class="a" style="left:0px;top:156.85px;width:13.5px;height:1px;background:#d3d3d3"></div>
<div class="a" style="left:13.5px;top:166.46px;width:743.9px;height:1px;background:#e8e8e8"></div>
<div class="a" style="left:0px;top:166.46px;width:13.5px;height:1px;background:#d3d3d3"></div>
<div class="a" style="left:13.5px;top:176.07px;width:743.9px;height:1px;background:#e8e8e8"></div>
<div class="a" style="left:0px;top:176.07px;width:13.5px;height:1px;background:#d3d3d3"></div>
<div class="a" style="left:13.5px;top:185.68px;width:743.9px;height:1px;background:#e8e8e8"></div>
<div class="a" style="left:0px;top:185.68px;width:13.5px;height:1px;background:#d3d3d3"></div>
<div class="a" style="left:13.5px;top:195.29px;width:743.9px;height:1px;background:#e8e8e8"></div>
<div class="a" style="left:0px;top:195.29px;width:13.5px;height:1px;background:#d3d3d3"></div>
<div class="a" style="left:13.5px;top:204.9px;width:743.9px;height:1px;background:#e8e8e8"></div>
<div class="a" style="left:0px;top:204.9px;width:13.5px;height:1px;background:#d3d3d3"></div>
<div class="a" style="left:13.5px;top:214.51px;width:743.9px;height:1px;background:#e8e8e8"></div>
<div class="a" style="left:0px;top:214.51px;width:13.5px;height:1px;background:#d3d3d3"></div>
<div class="a" style="left:13.5px;top:224.12px;width:743.9px;height:1px;background:#e8e8e8"></div>
<div class="a" style="left:0px;top:224.12px;width:13.5px;height:1px;background:#d3d3d3"></div>
<div class="a" style="left:13.5px;top:233.73px;width:743.9px;height:1px;background:#e8e8e8"></div>
<div class="a" style="left:0px;top:233.73px;width:13.5px;height:1px;background:#d3d3d3"></div>
<div class="a" style="left:13.5px;top:243.34px;width:743.9px;height:1px;background:#e8e8e8"></div>
<div class="a" style="left:0px;top:243.34px;width:13.5px;height:1px;background:#d3d3d3"></div>
<div class="a" style="left:13.5px;top:252.95px;width:743.9px;height:1px;background:#e8e8e8"></div>
<div class="a" style="left:0px;top:252.95px;width:13.5px;height:1px;background:#d3d3d3"></div>
<div class="a" style="left:13.5px;top:262.56px;width:743.9px;height:1px;background:#e8e8e8"></div>
<div class="a" style="left:0px;top:262.56px;width:13.5px;height:1px;background:#d3d3d3"></div>
<div class="a" style="left:13.5px;top:272.17px;width:743.9px;height:1px;background:#e8e8e8"></div>
<div class="a" style="left:0px;top:272.17px;width:13.5px;height:1px;background:#d3d3d3"></div>
<div class="a" style="left:13.5px;top:281.78px;width:743.9px;height:1px;background:#e8e8e8"></div>
<div class="a" style="left:0px;top:281.78px;width:13.5px;height:1px;background:#d3d3d3"></div>
<div class="a" style="left:13.5px;top:291.39px;width:743.9px;height:1px;background:#e8e8e8"></div>
<div class="a" style="left:0px;top:291.39px;width:13.5px;height:1px;background:#d3d3d3"></div>
<div class="a" style="left:13.5px;top:301.0px;width:743.9px;height:1px;background:#e8e8e8"></div>
<div class="a" style="left:0px;top:301.0px;width:13.5px;height:1px;background:#d3d3d3"></div>
<div class="a" style="left:13.5px;top:310.61px;width:743.9px;height:1px;background:#e8e8e8"></div>
<div class="a" style="left:0px;top:310.61px;width:13.5px;height:1px;background:#d3d3d3"></div>
<div class="a" style="left:13.5px;top:320.22px;width:743.9px;height:1px;background:#e8e8e8"></div>
<div class="a" style="left:0px;top:320.22px;width:13.5px;height:1px;background:#d3d3d3"></div>
<div class="a" style="left:13.5px;top:329.83px;width:743.9px;height:1px;background:#e8e8e8"></div>
<div class="a" style="left:0px;top:329.83px;width:13.5px;height:1px;background:#d3d3d3"></div>
<div class="a" style="left:13.5px;top:339.44px;width:743.9px;height:1px;background:#e8e8e8"></div>
<div class="a" style="left:0px;top:339.44px;width:13.5px;height:1px;background:#d3d3d3"></div>
<div class="a" style="left:13.5px;top:349.05px;width:743.9px;height:1px;background:#e8e8e8"></div>
<div class="a" style="left:0px;top:349.05px;width:13.5px;height:1px;background:#d3d3d3"></div>
<div class="a" style="left:13.5px;top:358.66px;width:743.9px;height:1px;background:#e8e8e8"></div>
<div class="a" style="left:0px;top:358.66px;width:13.5px;height:1px;background:#d3d3d3"></div>
<div class="a" style="left:13.5px;top:368.27px;width:743.9px;height:1px;background:#e8e8e8"></div>
<div class="a" style="left:0px;top:368.27px;width:13.5px;height:1px;background:#d3d3d3"></div>
<div class="a" style="left:13.5px;top:377.88px;width:743.9px;height:1px;background:#e8e8e8"></div>
<div class="a" style="left:0px;top:377.88px;width:13.5px;height:1px;background:#d3d3d3"></div>
<div class="a" style="left:13.5px;top:387.49px;width:743.9px;height:1px;background:#e8e8e8"></div>
<div class="a" style="left:0px;top:387.49px;width:13.5px;height:1px;background:#d3d3d3"></div>
<div class="a" style="left:0px;top:108.5px;width:757.4px;height:0.8px;background:#d2d2d2"></div>
<div class="t" style="left:42.86px;top:103.00px;font-size:7.1px;color:#444;transform:scaleX(0.880);transform-origin:0 0;">A</div>
<div class="t" style="left:105.77px;top:103.00px;font-size:7.1px;color:#444;transform:scaleX(0.880);transform-origin:0 0;">B</div>
<div class="t" style="left:169.25px;top:103.00px;font-size:7.1px;color:#217346;transform:scaleX(0.880);transform-origin:0 0;">C</div>
<div class="t" style="left:221.95px;top:103.00px;font-size:7.1px;color:#444;transform:scaleX(0.880);transform-origin:0 0;">D</div>
<div class="t" style="left:257.92px;top:103.00px;font-size:7.1px;color:#444;transform:scaleX(0.880);transform-origin:0 0;">E</div>
<div class="t" style="left:289.39px;top:103.00px;font-size:7.1px;color:#444;transform:scaleX(0.880);transform-origin:0 0;">F</div>
<div class="t" style="left:320.86px;top:103.00px;font-size:7.1px;color:#444;transform:scaleX(0.880);transform-origin:0 0;">G</div>
<div class="t" style="left:353.00px;top:103.00px;font-size:7.1px;color:#444;transform:scaleX(0.880);transform-origin:0 0;">H</div>
<div class="t" style="left:386.18px;top:103.00px;font-size:7.1px;color:#444;transform:scaleX(0.880);transform-origin:0 0;">I</div>
<div class="t" style="left:417.34px;top:103.00px;font-size:7.1px;color:#444;transform:scaleX(0.880);transform-origin:0 0;">J</div>
<div class="t" style="left:448.92px;top:103.00px;font-size:7.1px;color:#444;transform:scaleX(0.880);transform-origin:0 0;">K</div>
<div class="t" style="left:481.37px;top:103.00px;font-size:7.1px;color:#444;transform:scaleX(0.880);transform-origin:0 0;">L</div>
<div class="t" style="left:512.59px;top:103.00px;font-size:7.1px;color:#444;transform:scaleX(0.880);transform-origin:0 0;">M</div>
<div class="t" style="left:544.95px;top:103.00px;font-size:7.1px;color:#444;transform:scaleX(0.880);transform-origin:0 0;">N</div>
<div class="t" style="left:576.61px;top:103.00px;font-size:7.1px;color:#444;transform:scaleX(0.880);transform-origin:0 0;">O</div>
<div class="t" style="left:608.97px;top:103.00px;font-size:7.1px;color:#444;transform:scaleX(0.880);transform-origin:0 0;">P</div>
<div class="t" style="left:640.66px;top:103.00px;font-size:7.1px;color:#444;transform:scaleX(0.880);transform-origin:0 0;">Q</div>
<div class="t" style="left:672.95px;top:103.00px;font-size:7.1px;color:#444;transform:scaleX(0.880);transform-origin:0 0;">R</div>
<div class="t" style="left:705.12px;top:103.00px;font-size:7.1px;color:#444;transform:scaleX(0.880);transform-origin:0 0;">S</div>
<div class="t" style="left:737.09px;top:103.00px;font-size:7.1px;color:#444;transform:scaleX(0.880);transform-origin:0 0;">T</div>
<div class="t" style="left:5.45px;top:111.00px;font-size:7.2px;color:#444;transform:scaleX(0.776);transform-origin:0 0;-webkit-text-stroke:0.15px #444;">1</div>
<div class="t" style="left:5.45px;top:121.00px;font-size:7.2px;color:#444;transform:scaleX(0.776);transform-origin:0 0;-webkit-text-stroke:0.15px #444;">2</div>
<div class="t" style="left:5.45px;top:130.00px;font-size:7.2px;color:#444;transform:scaleX(0.776);transform-origin:0 0;-webkit-text-stroke:0.15px #444;">3</div>
<div class="t" style="left:5.45px;top:140.00px;font-size:7.2px;color:#444;transform:scaleX(0.776);transform-origin:0 0;-webkit-text-stroke:0.15px #444;">4</div>
<div class="t" style="left:5.45px;top:150.00px;font-size:7.2px;color:#444;transform:scaleX(0.776);transform-origin:0 0;-webkit-text-stroke:0.15px #444;">5</div>
<div class="t" style="left:5.45px;top:159.00px;font-size:7.2px;color:#444;transform:scaleX(0.776);transform-origin:0 0;-webkit-text-stroke:0.15px #444;">6</div>
<div class="t" style="left:5.45px;top:169.00px;font-size:7.2px;color:#217346;transform:scaleX(0.776);transform-origin:0 0;-webkit-text-stroke:0.15px #217346;">7</div>
<div class="t" style="left:5.45px;top:178.00px;font-size:7.2px;color:#444;transform:scaleX(0.776);transform-origin:0 0;-webkit-text-stroke:0.15px #444;">8</div>
<div class="t" style="left:5.45px;top:188.00px;font-size:7.2px;color:#444;transform:scaleX(0.776);transform-origin:0 0;-webkit-text-stroke:0.15px #444;">9</div>
<div class="t" style="left:3.80px;top:198.00px;font-size:7.2px;color:#444;transform:scaleX(0.801);transform-origin:0 0;-webkit-text-stroke:0.15px #444;">10</div>
<div class="t" style="left:3.80px;top:207.00px;font-size:7.2px;color:#444;transform:scaleX(0.855);transform-origin:0 0;-webkit-text-stroke:0.15px #444;">11</div>
<div class="t" style="left:3.80px;top:217.00px;font-size:7.2px;color:#444;transform:scaleX(0.801);transform-origin:0 0;-webkit-text-stroke:0.15px #444;">12</div>
<div class="t" style="left:3.80px;top:227.00px;font-size:7.2px;color:#444;transform:scaleX(0.801);transform-origin:0 0;-webkit-text-stroke:0.15px #444;">13</div>
<div class="t" style="left:3.80px;top:236.00px;font-size:7.2px;color:#444;transform:scaleX(0.801);transform-origin:0 0;-webkit-text-stroke:0.15px #444;">14</div>
<div class="t" style="left:3.80px;top:246.00px;font-size:7.2px;color:#444;transform:scaleX(0.801);transform-origin:0 0;-webkit-text-stroke:0.15px #444;">15</div>
<div class="t" style="left:3.80px;top:255.00px;font-size:7.2px;color:#444;transform:scaleX(0.801);transform-origin:0 0;-webkit-text-stroke:0.15px #444;">16</div>
<div class="t" style="left:3.80px;top:265.00px;font-size:7.2px;color:#444;transform:scaleX(0.801);transform-origin:0 0;-webkit-text-stroke:0.15px #444;">17</div>
<div class="t" style="left:3.80px;top:275.00px;font-size:7.2px;color:#444;transform:scaleX(0.801);transform-origin:0 0;-webkit-text-stroke:0.15px #444;">18</div>
<div class="t" style="left:3.80px;top:284.00px;font-size:7.2px;color:#444;transform:scaleX(0.801);transform-origin:0 0;-webkit-text-stroke:0.15px #444;">19</div>
<div class="t" style="left:3.80px;top:294.00px;font-size:7.2px;color:#444;transform:scaleX(0.801);transform-origin:0 0;-webkit-text-stroke:0.15px #444;">20</div>
<div class="t" style="left:3.80px;top:303.00px;font-size:7.2px;color:#444;transform:scaleX(0.801);transform-origin:0 0;-webkit-text-stroke:0.15px #444;">21</div>
<div class="t" style="left:3.80px;top:313.00px;font-size:7.2px;color:#444;transform:scaleX(0.801);transform-origin:0 0;-webkit-text-stroke:0.15px #444;">22</div>
<div class="t" style="left:3.80px;top:323.00px;font-size:7.2px;color:#444;transform:scaleX(0.801);transform-origin:0 0;-webkit-text-stroke:0.15px #444;">23</div>
<div class="t" style="left:3.80px;top:332.00px;font-size:7.2px;color:#444;transform:scaleX(0.801);transform-origin:0 0;-webkit-text-stroke:0.15px #444;">24</div>
<div class="t" style="left:3.80px;top:342.00px;font-size:7.2px;color:#444;transform:scaleX(0.801);transform-origin:0 0;-webkit-text-stroke:0.15px #444;">25</div>
<div class="t" style="left:3.80px;top:351.00px;font-size:7.2px;color:#444;transform:scaleX(0.801);transform-origin:0 0;-webkit-text-stroke:0.15px #444;">26</div>
<div class="t" style="left:3.80px;top:361.00px;font-size:7.2px;color:#444;transform:scaleX(0.801);transform-origin:0 0;-webkit-text-stroke:0.15px #444;">27</div>
<div class="t" style="left:3.80px;top:371.00px;font-size:7.2px;color:#444;transform:scaleX(0.801);transform-origin:0 0;-webkit-text-stroke:0.15px #444;">28</div>
<div class="t" style="left:3.80px;top:380.00px;font-size:7.2px;color:#444;transform:scaleX(0.801);transform-origin:0 0;-webkit-text-stroke:0.15px #444;">29</div>
<div class="t" style="left:14.90px;top:111.00px;font-size:6.9px;color:#111;font-weight:bold;transform:scaleX(0.910);transform-origin:0 0;">Artist’s Name</div>
<div class="t" style="left:77.80px;top:111.00px;font-size:6.9px;color:#111;font-weight:bold;transform:scaleX(0.910);transform-origin:0 0;">Album</div>
<div class="t" style="left:140.70px;top:111.00px;font-size:6.9px;color:#111;font-weight:bold;transform:scaleX(0.910);transform-origin:0 0;">Songs name</div>
<div class="t" style="left:14.90px;top:121.00px;font-size:6.9px;color:#111;transform:scaleX(0.950);transform-origin:0 0;-webkit-text-stroke:0.22px #222;">Zayn Malik</div>
<div class="t" style="left:77.80px;top:121.00px;font-size:6.9px;color:#111;transform:scaleX(0.950);transform-origin:0 0;-webkit-text-stroke:0.22px #222;">Mind of mind</div>
<div class="t" style="left:140.70px;top:121.00px;font-size:6.9px;color:#111;transform:scaleX(0.950);transform-origin:0 0;-webkit-text-stroke:0.22px #222;">Pillow talk</div>
<div class="t" style="left:14.90px;top:131.00px;font-size:6.9px;color:#111;transform:scaleX(0.950);transform-origin:0 0;-webkit-text-stroke:0.22px #222;">Harry styles</div>
<div class="t" style="left:77.80px;top:131.00px;font-size:6.9px;color:#111;transform:scaleX(0.950);transform-origin:0 0;-webkit-text-stroke:0.22px #222;">Fine line</div>
<div class="t" style="left:140.70px;top:131.00px;font-size:6.9px;color:#111;transform:scaleX(0.950);transform-origin:0 0;-webkit-text-stroke:0.22px #222;">Golden</div>
<div class="t" style="left:14.90px;top:140.00px;font-size:6.9px;color:#111;transform:scaleX(0.950);transform-origin:0 0;-webkit-text-stroke:0.22px #222;">Louis Tomlinson</div>
<div class="t" style="left:77.80px;top:140.00px;font-size:6.9px;color:#111;transform:scaleX(0.950);transform-origin:0 0;-webkit-text-stroke:0.22px #222;">Walls</div>
<div class="t" style="left:140.70px;top:140.00px;font-size:6.9px;color:#111;transform:scaleX(0.950);transform-origin:0 0;-webkit-text-stroke:0.22px #222;">Always you</div>
<div class="t" style="left:14.90px;top:150.00px;font-size:6.9px;color:#111;transform:scaleX(0.950);transform-origin:0 0;-webkit-text-stroke:0.22px #222;">Naill Horan</div>
<div class="t" style="left:77.80px;top:150.00px;font-size:6.9px;color:#111;transform:scaleX(0.950);transform-origin:0 0;-webkit-text-stroke:0.22px #222;">Heartbreak&nbsp; Weather</div>
<div class="t" style="left:140.70px;top:150.00px;font-size:6.9px;color:#111;transform:scaleX(0.950);transform-origin:0 0;-webkit-text-stroke:0.22px #222;">Bend the rules</div>
<div class="t" style="left:14.90px;top:159.00px;font-size:6.9px;color:#111;transform:scaleX(0.950);transform-origin:0 0;-webkit-text-stroke:0.22px #222;">Liam Payne</div>
<div class="t" style="left:77.80px;top:159.00px;font-size:6.9px;color:#111;transform:scaleX(0.950);transform-origin:0 0;-webkit-text-stroke:0.22px #222;">LP1</div>
<div class="t" style="left:140.70px;top:159.00px;font-size:6.9px;color:#111;transform:scaleX(0.950);transform-origin:0 0;-webkit-text-stroke:0.22px #222;">Strip that down</div>
<div class="t" style="left:14.90px;top:169.00px;font-size:6.9px;color:#111;transform:scaleX(0.950);transform-origin:0 0;-webkit-text-stroke:0.22px #222;">JB</div>
<div class="t" style="left:77.80px;top:169.00px;font-size:6.9px;color:#111;transform:scaleX(0.950);transform-origin:0 0;-webkit-text-stroke:0.22px #222;">Purpose</div>
<div class="t" style="left:140.70px;top:169.00px;font-size:6.9px;color:#111;transform:scaleX(0.950);transform-origin:0 0;-webkit-text-stroke:0.22px #222;">Sorry</div>
<div class="a" style="left:138.7px;top:166.16px;width:65.6px;height:10.91px;border:1.6px solid #80b794"></div>
<svg class="a" style="left:0px;top:0px;overflow:visible" width="768" height="412" viewBox="0 0 768 412"><rect x="13.50" y="109.20" width="190.20" height="67.37" fill="none" stroke="#4a966b" stroke-width="1.1" stroke-dasharray="2.8 1.2"/></svg>
<div class="a" style="left:202.7px;top:175.57px;width:2px;height:2px;background:#217346"></div>
<div class="a" style="left:757.4px;top:100.4px;width:10.600000000000023px;height:289.1px;background:#e9e9e9"></div>
<div class="a" style="left:759.3px;top:101.6px;width:7.3px;height:6.6px;background:#fff;border:0.5px solid #cdcdcd"></div>
<svg class="a" style="left:761.2px;top:103.6px;overflow:visible" width="3.6" height="2.4" viewBox="0 0 3.6 2.4"><path d="M0 2.2 h3.4 l-1.7 -2z" fill="#505050"/></svg>
<div class="a" style="left:759.3px;top:108.6px;width:7.3px;height:275px;background:#fff;border-left:0.5px solid #cdcdcd;border-right:0.5px solid #cdcdcd"></div>
<div class="a" style="left:759.6px;top:383.5px;width:7px;height:6.4px;background:#fff;border:0.5px solid #cdcdcd"></div>
<svg class="a" style="left:761.3px;top:385.6px;overflow:visible" width="3.6" height="2.4" viewBox="0 0 3.6 2.4"><path d="M0 0.2 h3.4 l-1.7 2z" fill="#505050"/></svg>
<div class="a" style="left:0px;top:389.5px;width:768px;height:11.5px;background:#e6e6e6;border-top:0.6px solid #c6c6c6"></div>
<svg class="a" style="left:11.4px;top:393.4px;overflow:visible" width="13" height="4" viewBox="0 0 13 4"><g fill="#c4c4c4"><path d="M2 0 v3.6 l-1.8 -1.8z"/><path d="M11 0 v3.6 l1.8 -1.8z"/></g></svg>
<div class="a" style="left:41.4px;top:389.5px;width:31.1px;height:11.2px;background:#fff;border-bottom:1px solid #4f9a6f;border-left:0.5px solid #cfcfcf;border-right:0.5px solid #cfcfcf"></div>
<div class="t" style="left:45.80px;top:391.00px;font-size:6.8px;color:#217346;font-weight:bold;transform:scaleX(0.982);transform-origin:0 0;">Sheet1</div>
<svg class="a" style="left:85px;top:391.1px;overflow:visible" width="10" height="10" viewBox="0 0 10 10"><circle cx="4.8" cy="4.6" r="3.9" stroke="#bdbdbd" stroke-width="0.7" fill="none"/><path d="M4.8 2.8 v3.6 M3 4.6 h3.6" stroke="#bdbdbd" stroke-width="0.7"/></svg>
<div class="a" style="left:459.6px;top:393px;width:1px;height:6px;border-left:1px dotted #a8a8a8"></div>
<div class="a" style="left:466.5px;top:392.3px;width:291px;height:7.2px;background:#fff;border:0.5px solid #cfcfcf"></div>
<svg class="a" style="left:468.7px;top:394.1px;overflow:visible" width="3" height="4" viewBox="0 0 3 4"><path d="M2.6 0 v3.6 l-2.2 -1.8z" fill="#505050"/></svg>
<div class="a" style="left:736px;top:392.6px;width:15px;height:6.6px;background:#dcdcdc"></div>
<div class="a" style="left:751px;top:392.3px;width:6.5px;height:7.2px;background:#fff;border:0.5px solid #cfcfcf"></div>
<svg class="a" style="left:753.3px;top:394.1px;overflow:visible" width="3" height="4" viewBox="0 0 3 4"><path d="M0.4 0 v3.6 l2.2 -1.8z" fill="#505050"/></svg>
<div class="a" style="left:0px;top:401px;width:768px;height:11px;background:#f3f3f3"></div>
<div class="t" style="left:3.90px;top:405.00px;font-size:6.2px;color:#333;transform:scaleX(0.847);transform-origin:0 0;">Click and drag to insert a text box.</div>
<svg class="a" style="left:620px;top:402px;overflow:visible" width="148" height="10" viewBox="0 0 148 10"><g stroke="#8e8e8e" stroke-width="0.6" fill="none">
<rect x="6.3" y="2.3" width="6.2" height="6.2"/><line x1="6.3" y1="4.35" x2="12.5" y2="4.35"/><line x1="6.3" y1="6.4" x2="12.5" y2="6.4"/><line x1="8.4" y1="2.3" x2="8.4" y2="8.5"/><line x1="10.4" y1="2.3" x2="10.4" y2="8.5"/>
<rect x="25.6" y="2.6" width="7" height="5.6"/><rect x="27.4" y="3.6" width="3.4" height="3.6"/>
<rect x="45.3" y="2.6" width="7.3" height="5.6"/><polyline points="47.3,2.6 47.3,5 50.6,5 50.6,2.6"/>
</g>
<g stroke="#b8b8b8" stroke-width="0.6"><line x1="62" y1="4.7" x2="66" y2="4.7"/>
<line x1="68.2" y1="4.7" x2="118.6" y2="4.7"/><line x1="93.3" y1="3.2" x2="93.3" y2="6.2"/>
<line x1="121" y1="4.7" x2="124.8" y2="4.7"/><line x1="122.9" y1="2.8" x2="122.9" y2="6.6"/></g></svg>
<div class="t" style="left:751.60px;top:405.00px;font-size:5.6px;color:#a8a8a8;transform:scaleX(0.858);transform-origin:0 0;">100%</div>
<div class="t" style="left:500.00px;top:278.00px;font-size:10.8px;color:#1c1c1c;transform:scaleX(1.119);transform-origin:0 0;">developerpublish.com</div>
<div class="a" style="left:315.7px;top:150.4px;width:136px;height:74px;background:#f0f0f0;border:0.6px solid #a9a9a9;box-shadow:0.5px 1.5px 4px rgba(0,0,0,0.28)"></div>
<div class="a" style="left:316.3px;top:151.0px;width:134.8px;height:14.599999999999989px;background:#fff"></div>
<div class="t" style="left:319.20px;top:155.00px;font-size:6.4px;color:#2b2b2b;transform:scaleX(0.920);transform-origin:0 0;">Format As Table</div>
<div class="t" style="left:416.20px;top:155.00px;font-size:6.4px;color:#444;transform:scaleX(0.873);transform-origin:0 0;">?</div>
<svg class="a" style="left:438.1px;top:156.2px;overflow:visible" width="5" height="4.5" viewBox="0 0 5 4.5"><g stroke="#3a3a3a" stroke-width="0.6"><line x1="0.2" y1="0.2" x2="4.8" y2="4.3"/><line x1="4.8" y1="0.2" x2="0.2" y2="4.3"/></g></svg>
<div class="t" style="left:319.20px;top:169.00px;font-size:6.4px;color:#222;transform:scaleX(0.827);transform-origin:0 0;">Where is the data for your table?</div>
<div class="a" style="left:319.4px;top:176.4px;width:5.2px;height:0.5px;background:#555"></div>
<div class="a" style="left:333.6px;top:178.1px;width:115.2px;height:9.6px;background:#fff;border:0.6px solid #a0a0a0"></div>
<div class="a" style="left:335.6px;top:179.5px;width:28.2px;height:6.5px;background:#c8c8c8"></div>
<div class="t" style="left:336.00px;top:181.00px;font-size:5.2px;color:#333;transform:scaleX(0.929);transform-origin:0 0;">=$A$1:$C$7</div>
<div class="a" style="left:363.8px;top:179.4px;width:0.6px;height:6.8px;background:#111"></div>
<div class="a" style="left:438.1px;top:178.1px;width:10.7px;height:9.6px;background:#fdfdfd;border:0.6px solid #a0a0a0"></div>
<svg class="a" style="left:441.4px;top:180px;overflow:visible" width="4.4" height="5.8" viewBox="0 0 4.4 5.8"><path d="M2.2 0.2 l2 2.2 h-1.2 v1.5 h-1.6 v-1.5 h-1.2z" fill="#222"/><rect x="0.2" y="4.6" width="4" height="1" fill="#222"/><circle cx="2.2" cy="1.6" r="1.1" fill="#222"/></svg>
<div class="a" style="left:333.4px;top:193.2px;width:6.5px;height:6.6px;background:#fff;border:0.6px solid #333"></div>
<svg class="a" style="left:334.2px;top:194.2px;overflow:visible" width="5" height="5" viewBox="0 0 5 5"><polyline points="0.6,2.5 1.9,3.9 4.4,0.9" stroke="#222" stroke-width="0.7" fill="none"/></svg>
<div class="t" style="left:341.90px;top:193.00px;font-size:6.4px;color:#222;transform:scaleX(0.820);transform-origin:0 0;">My table has headers</div>
<div class="a" style="left:342px;top:200.2px;width:4.2px;height:0.5px;background:#555"></div>
<div class="a" style="left:353px;top:208.6px;width:44.7px;height:11.2px;background:#e1e1e1;border:1px solid #0a78d4"></div>
<div class="t" style="left:372.20px;top:212.00px;font-size:5.8px;color:#222;transform:scaleX(0.787);transform-origin:0 0;">OK</div>
<div class="a" style="left:403.2px;top:208.6px;width:45.6px;height:11.2px;background:#e1e1e1;border:0.6px solid #adadad"></div>
<div class="t" style="left:418.10px;top:212.00px;font-size:5.8px;color:#222;transform:scaleX(0.891);transform-origin:0 0;">Cancel</div>
</div></body></html>
